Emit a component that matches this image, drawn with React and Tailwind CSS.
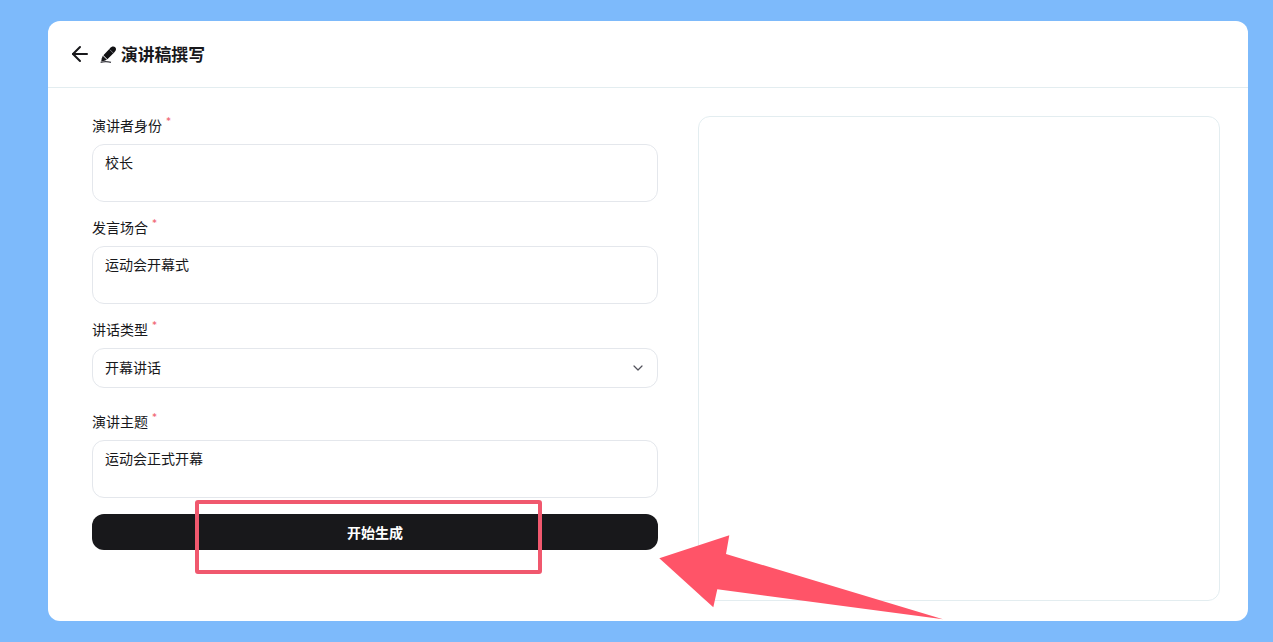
import { ArrowLeft, ChevronDown } from 'lucide-react';

const fontStack = { fontFamily: 'Inter, "Noto Sans CJK SC", sans-serif' };

const Label = ({ children }) => (
  <div className="h-[18px] flex items-start text-[14px] leading-[18px] text-[#18181b]">
    <span className="-mt-[1px]">{children}</span>
    <span className="ml-[4px] -mt-[4px] text-[10px] leading-[14px] text-[#f0626e]">*</span>
  </div>
);

const TextBox = ({ value }) => (
  <textarea
    readOnly
    value={value}
    className="mt-[8px] block w-full h-[58px] resize-none rounded-[12px] border border-[#e4e7ec] bg-white px-[12px] py-[9px] text-[14px] leading-[18px] text-[#18181b] outline-none"
  />
);

const PenIcon = () => (
  <svg width="17" height="17" viewBox="0 0 17 17" className="shrink-0">
    <path d="M9.800 2.400c1.700-2.100 4-2.500 5.400-1.200s1 3.600-1 5.300l-6.800 6.700-4-4z" fill="#111113" />
    <path d="M2.800 9.700l4.100 4.100-2.300 1-3.400.8.500-3.200z" fill="#18181b" />
    <path d="M9.800 3.600l3.400 3.400" stroke="#a1a1aa" strokeWidth=".7" />
    <path d="M.6 16.400c3.400-1 7-1 10.400 0" fill="none" stroke="#3f3f46" strokeWidth="1.200" />
  </svg>
);

export default function App() {
  return (
    <div style={fontStack} className="relative h-[642px] w-full overflow-hidden bg-[#7dbafb] pt-[21px] pl-[48px]">
      <div className="h-[600px] w-[1200px] rounded-[12px] bg-white flex flex-col overflow-hidden">
        {/* Header */}
        <div className="h-[67px] shrink-0 border-b border-[#e3edf0] flex items-center pl-[20px] pb-[1px]">
          <ArrowLeft size={24} strokeWidth={2} className="text-[#18181b]" />
          <div className="ml-[8px] mt-[2px] flex items-center">
            <PenIcon />
            <span className="ml-[4px] mt-[2px] text-[16.800px] font-bold text-[#18181b]">演讲稿撰写</span>
          </div>
        </div>

        {/* Body */}
        <div className="flex flex-1 pl-[44px] pr-[28px] pt-[28px]">
          <div className="w-[566px] shrink-0">
            <div className="pt-[2px]">
              <Label>演讲者身份</Label>
              <TextBox value="校长" />
            </div>
            <div className="mt-[18px]">
              <Label>发言场合</Label>
              <TextBox value="运动会开幕式" />
            </div>
            <div className="mt-[18px]">
              <Label>讲话类型</Label>
              <div className="mt-[8px] h-[40px] rounded-[12px] border border-[#e4e7ec] pl-[12px] pr-[11px] pb-[2px] flex items-center justify-between text-[14px] text-[#18181b]">
                <span>开幕讲话</span>
                <ChevronDown size={16} strokeWidth={1.8} className="mt-[2px] text-[#52525b]" />
              </div>
            </div>
            <div className="mt-[26px]">
              <Label>演讲主题</Label>
              <TextBox value="运动会正式开幕" />
            </div>
            <button className="mt-[16px] block h-[36px] w-full rounded-[12px] bg-[#18181b] text-[14px] font-bold text-white">
              开始生成
            </button>
          </div>

          <div className="ml-[40px] h-[485px] flex-1 rounded-[12px] border border-[#e3edf0] bg-white" />
        </div>
      </div>

      {/* Annotation marks drawn over the screenshot */}
      <div className="absolute left-[195px] top-[500px] h-[74px] w-[347px] rounded-[3px] border-[4px] border-[#f0586e]" />
      <svg className="absolute left-0 top-0 pointer-events-none" width="1273" height="642">
        <polygon
          points="659.3,558.3 729.3,535.300 726,554 943,619.3 717.3,589.3 713.3,607.3"
          fill="#ff5468"
        />
      </svg>
    </div>
  );
}
